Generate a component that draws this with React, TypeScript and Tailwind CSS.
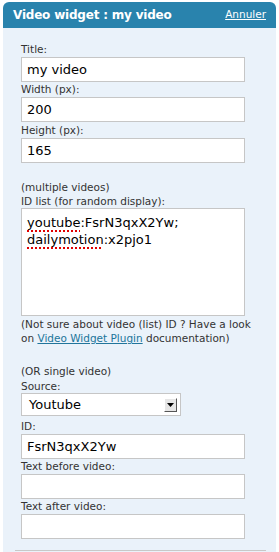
import React from 'react';

const font = { fontFamily: '"DejaVu Sans", "Lucida Grande", Verdana, sans-serif' };

function Field({ label, value }: { label: string; value?: string }) {
  return (
    <div>
      <div className="h-[15px] text-[10.5px] leading-[15px] text-[#333]">{label}</div>
      <div className="w-[224px] h-[25px] bg-white border border-[#c6c6c6] px-[5px] text-[13px] leading-[23px] text-black">
        {value}
      </div>
    </div>
  );
}

function Spell({ children }: { children: React.ReactNode }) {
  return (
    <span className="underline decoration-dotted decoration-[#e00000] decoration-[1.5px] underline-offset-[3px]">
      {children}
    </span>
  );
}

export default function App() {
  return (
    <div className="w-[279px] h-[552px] bg-white pt-[2px] px-[3px] overflow-hidden" style={font}>
      <div className="flex items-center justify-between h-[26px] bg-[#2983ad] rounded-t-[6px] pl-[10px] pr-[10px]">
        <span className="text-white font-bold text-[12px] tracking-[-0.2px]">Video widget : my video</span>
        <a className="text-white underline text-[10.5px]">Annuler</a>
      </div>
      <div className="bg-[#eaf2fa] h-[530px] pl-[18px] pt-[14px]">
        <Field label="Title:" value="my video" />
        <Field label="Width (px):" value="200" />
        <div className="h-[1px]" />
        <Field label="Height (px):" value="165" />

        <div className="mt-[17px] text-[10.5px] leading-[14px] text-[#333]">(multiple videos)</div>
        <div className="text-[10.5px] leading-[14px] text-[#333]">ID list (for random display):</div>
        <div className="w-[224px] h-[108px] bg-white border border-[#c6c6c6] px-[5px] pt-[5px] text-[13px] leading-[17px] text-black">
          <div><Spell>youtube</Spell>:FsrN3qxX2Yw;</div>
          <div><Spell>dailymotion</Spell>:x2pjo1</div>
        </div>
        <div className="mt-[1px] text-[10.5px] leading-[14px] text-[#333] w-[240px]">
          (Not sure about video (list) ID ? Have a look on{' '}
          <a className="text-[#21759b] underline leading-[14px]">Video Widget Plugin</a> documentation)
        </div>

        <div className="mt-[19px] text-[10.5px] leading-[15px] text-[#333]">(OR single video)</div>
        <div className="text-[10.5px] leading-[14px] text-[#333]">Source:</div>
        <div className="w-[160px] h-[23px] bg-white border border-[#c6c6c6] flex items-center justify-between pl-[7px] pr-[3px]">
          <span className="text-[13px] text-black">Youtube</span>
          <span className="w-[13px] h-[14px] bg-[#e6e6e6] border border-t-white border-l-white border-r-[#555] border-b-[#555] flex items-center justify-center">
            <svg width="7" height="4" viewBox="0 0 7 4"><path d="M0 0h7L3.5 4z" fill="#000" /></svg>
          </span>
        </div>
        <div className="mt-[3px]">
          <Field label="ID:" value="FsrN3qxX2Yw" />
        </div>
        <Field label="Text before video:" />
        <Field label="Text after video:" />
        <div className="mt-[11px] -ml-[6px] w-[251px] h-[1px] bg-[#c8c8c8]" />
      </div>
    </div>
  );
}
